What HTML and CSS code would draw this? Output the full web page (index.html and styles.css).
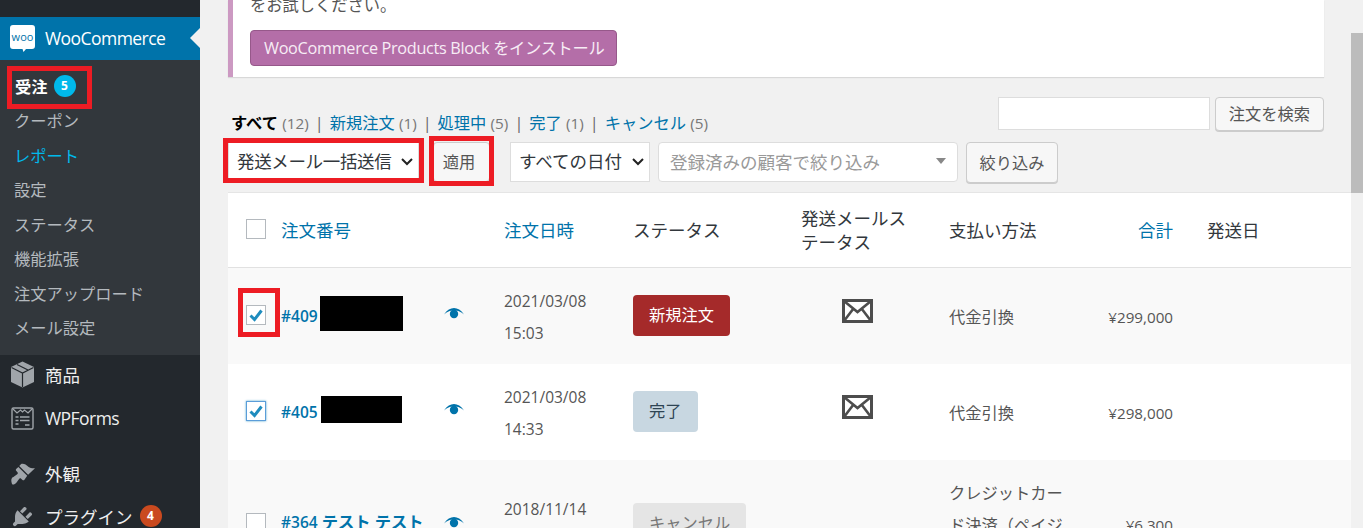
FILE: index.html
```html
<!DOCTYPE html>
<html lang="ja">
<head>
  <meta charset="UTF-8">
  <title>注文 - WooCommerce</title>
  <link rel="stylesheet" href="styles.css">
</head>
<body>

  <nav class="sidebar">
    <a class="menu-item current latin" href="#">
      <svg class="menu-icon" width="25" height="27" viewBox="0 0 25 27">
        <path fill="#fff" d="M3 0h19a3 3 0 0 1 3 3v18a3 3 0 0 1-3 3h-6l-2.500 3-1-3H3a3 3 0 0 1-3-3V3a3 3 0 0 1 3-3z"/>
        <text class="woo-text" x="12.500" y="15.500" text-anchor="middle">woo</text>
      </svg>
      WooCommerce
    </a>
    <div class="submenu">
      <a class="sub-item strong" href="#"><span class="marked mark-orders">受注</span><span class="count count-blue">5</span></a>
      <a class="sub-item" href="#">クーポン</a>
      <a class="sub-item active" href="#">レポート</a>
      <a class="sub-item" href="#">設定</a>
      <a class="sub-item" href="#">ステータス</a>
      <a class="sub-item" href="#">機能拡張</a>
      <a class="sub-item" href="#">注文アップロード</a>
      <a class="sub-item" href="#">メール設定</a>
    </div>
    <a class="menu-item" href="#">
      <svg class="menu-icon" width="25" height="27" viewBox="0 0 25 27">
        <path fill="#a0a5aa" d="M12.500 0.500L24 6v15l-11.500 5.500L1 21V6z"/>
        <path fill="none" stroke="#23282d" stroke-width="1.200" d="M1.500 6.500l11 5.500 11-5.500M7 3.500l11 5.500M12.500 12v14"/>
      </svg>
      商品
    </a>
    <a class="menu-item latin" href="#">
      <svg class="menu-icon" width="25" height="25" viewBox="0 0 25 25">
        <rect x="2" y="2" width="21" height="21" rx="1.500" fill="none" stroke="#a0a5aa" stroke-width="1.400"/>
        <path fill="none" stroke="#a0a5aa" stroke-width="1.200" d="M3 3l4 4 3.500-3 2 2 2-2 3.500 3 4-4"/>
        <path fill="none" stroke="#a0a5aa" stroke-width="1.600" d="M5.500 11h3M10 11h9.500M5.500 14.500h3M10 14.500h9.500M5.500 18h3M15 19h4.500"/>
      </svg>
      WPForms
    </a>
    <a class="menu-item menu-gap" href="#">
      <svg class="menu-icon" width="25" height="25" viewBox="0 0 20 20">
        <path fill="#a0a5aa" d="M14.480 11.060L7.410 3.990l1.500-1.500c.5-.56 2.300-.47 3.510.32 1.210.8 1.430 1.280 2.910 2.100 1.180.64 2.450 1.260 4.670.85l-5.520 5.300zm-.71.71L6.700 4.700 4.930 6.470c-.39.39-.39 1.020 0 1.410l1.060 1.060c.39.39.39 1.030 0 1.420-.6.6-1.430 1.110-2.210 1.690-.35.26-.7.53-1.010.84C1.430 13.230.4 14.800 1.600 18.400c.9 1 2.400.1 3.400-1 .3-.3.6-.7.8-1.100.6-.8 1.100-1.600 1.700-2.200.4-.4 1-.4 1.400 0l1.100 1c.4.4 1 .4 1.400 0z"/>
      </svg>
      外観
    </a>
    <a class="menu-item" href="#">
      <svg class="menu-icon" width="25" height="25" viewBox="0 0 20 20">
        <path fill="#a0a5aa" d="M13.110 4.360L9.870 7.600 8 5.730l3.240-3.240c.35-.34 1.050-.2 1.560.32.52.51.66 1.210.31 1.550zm-8 1.770l.91-1.120 9.010 9.010-1.190.84c-.71.71-2.630 1.160-3.820 1.160H6.140L4.900 17.260c-.59.59-1.540.59-2.120 0-.59-.58-.59-1.530 0-2.120l1.240-1.240v-3.880c0-1.130.4-3.190 1.090-3.890zm7.260 3.970l3.240-3.240c.34-.35 1.040-.21 1.550.31.52.51.66 1.210.31 1.550l-3.240 3.250z"/>
      </svg>
      プラグイン<span class="count count-orange">4</span>
    </a>
  </nav>

  <main class="content">
    <div class="notice">
      <p>をお試しください。</p>
      <a class="btn-woo" href="#">WooCommerce Products Block をインストール</a>
    </div>

    <div class="top-row">
      <ul class="status-links">
        <li><b>すべて</b> <span class="num">(12)</span></li>
        <li><a href="#">新規注文</a> <span class="num">(1)</span></li>
        <li><a href="#">処理中</a> <span class="num">(5)</span></li>
        <li><a href="#">完了</a> <span class="num">(1)</span></li>
        <li><a href="#">キャンセル</a> <span class="num">(5)</span></li>
      </ul>
      <form class="search-box">
        <input type="text" class="search-input">
        <button type="button" class="btn">注文を検索</button>
      </form>
    </div>

    <div class="filters">
      <div class="marked mark-bulk">
        <select class="select select-bulk"><option>発送メール一括送信</option></select>
      </div>
      <div class="marked mark-apply">
        <button type="button" class="btn btn-apply">適用</button>
      </div>
      <select class="select select-date"><option>すべての日付</option></select>
      <div class="customer-select">
        <span>登録済みの顧客で絞り込み</span>
        <i class="caret"></i>
      </div>
      <button type="button" class="btn btn-filter">絞り込み</button>
    </div>

    <table class="orders">
      <colgroup>
        <col class="col-check">
        <col class="col-order">
        <col class="col-date">
        <col class="col-status">
        <col class="col-mail">
        <col class="col-pay">
        <col class="col-total">
        <col>
      </colgroup>
      <thead>
        <tr>
          <th><span class="check"></span></th>
          <th><a href="#">注文番号</a></th>
          <th><a href="#">注文日時</a></th>
          <th>ステータス</th>
          <th>発送メールス<br>テータス</th>
          <th>支払い方法</th>
          <th class="right"><a href="#">合計</a></th>
          <th class="th-ship">発送日</th>
        </tr>
      </thead>
      <tbody>
        <tr class="odd">
          <td><span class="marked mark-check check checked"></span></td>
          <td>
            <div class="order-cell redacted">
              <span class="order-name"><a class="order-id" href="#">#409</a><span class="redact redact-a"></span></span>
              <svg class="eye" width="20" height="11" viewBox="0 0 20 11"><path d="M0 6.500C3 2 6.500 0 10 0s7 2 10 6.500C17 4 14.500 3 13 2.800H7C5.500 3 3 4 0 6.500z"/><circle cx="10" cy="6" r="4.200"/></svg>
            </div>
          </td>
          <td class="text-cell date">2021/03/08<br>15:03</td>
          <td><span class="badge badge-new">新規注文</span></td>
          <td class="mail">
            <svg width="31" height="24" viewBox="0 0 31 24"><rect x="1.500" y="1.500" width="28" height="21" fill="#fff" stroke="#4d4d4d" stroke-width="3"/><path fill="none" stroke="#4d4d4d" stroke-width="2.600" d="M2 2l13.500 11L29 2M2 22l9.500-12.500M29 22L19.500 9.500"/></svg>
          </td>
          <td class="text-cell">代金引換</td>
          <td class="text-cell right total">¥299,000</td>
          <td></td>
        </tr>
        <tr>
          <td><span class="check checked focused"></span></td>
          <td>
            <div class="order-cell redacted">
              <span class="order-name"><a class="order-id" href="#">#405</a><span class="redact redact-b"></span></span>
              <svg class="eye" width="20" height="11" viewBox="0 0 20 11"><path d="M0 6.500C3 2 6.500 0 10 0s7 2 10 6.500C17 4 14.500 3 13 2.800H7C5.500 3 3 4 0 6.500z"/><circle cx="10" cy="6" r="4.200"/></svg>
            </div>
          </td>
          <td class="text-cell date">2021/03/08<br>14:33</td>
          <td><span class="badge badge-done">完了</span></td>
          <td class="mail">
            <svg width="31" height="24" viewBox="0 0 31 24"><rect x="1.500" y="1.500" width="28" height="21" fill="#fff" stroke="#4d4d4d" stroke-width="3"/><path fill="none" stroke="#4d4d4d" stroke-width="2.600" d="M2 2l13.500 11L29 2M2 22l9.500-12.500M29 22L19.500 9.500"/></svg>
          </td>
          <td class="text-cell">代金引換</td>
          <td class="text-cell right total">¥298,000</td>
          <td></td>
        </tr>
        <tr class="odd">
          <td><span class="check"></span></td>
          <td>
            <div class="order-cell">
              <span class="order-name"><a href="#"><span class="order-id">#364</span> テスト テスト</a></span>
              <svg class="eye" width="20" height="11" viewBox="0 0 20 11"><path d="M0 6.500C3 2 6.500 0 10 0s7 2 10 6.500C17 4 14.500 3 13 2.800H7C5.500 3 3 4 0 6.500z"/><circle cx="10" cy="6" r="4.200"/></svg>
            </div>
          </td>
          <td class="text-cell date">2018/11/14<br>10:20</td>
          <td><span class="badge badge-cancel">キャンセル</span></td>
          <td></td>
          <td class="text-cell">クレジットカード決済（ペイジェント）</td>
          <td class="text-cell right total">¥6,300</td>
          <td></td>
        </tr>
      </tbody>
    </table>
  </main>

  <div class="scrollbar"><div class="thumb"></div></div>

</body>
</html>
```

FILE: styles.css
```css
* {
  box-sizing: border-box;
}

html, body {
  height: 528px;
  overflow: hidden;
}

body {
  margin: 0;
  display: flex;
  background-color: #f1f1f1;
  color: #555;
  font-family: "Open Sans", "Noto Sans CJK JP", sans-serif;
  font-size: 16.25px;
}

a {
  text-decoration: none;
  color: #0073aa;
}

/* sidebar */
.sidebar {
  width: 200px;
  flex: none;
  padding-top: 17px;
  background-color: #23282d;
}

.menu-item {
  display: flex;
  align-items: center;
  height: 42.5px;
  padding: 0 0 2px 10px;
  color: #eee;
  font-size: 17.5px;
  white-space: nowrap;
}

.menu-item.latin {
  padding-bottom: 0;
  letter-spacing: -0.55px;
}

.menu-icon {
  flex: none;
  margin-right: 10px;
}

.menu-item.current {
  position: relative;
  background-color: #0073aa;
  color: #fff;
}

.menu-item.current::after {
  content: "";
  position: absolute;
  right: 0;
  top: 11px;
  border: 10px solid transparent;
  border-right-color: #f1f1f1;
  border-left-width: 0;
}

.woo-text {
  fill: #0073aa;
  font-size: 11px;
  letter-spacing: 0;
}

.menu-gap {
  margin-top: 14px;
}

.submenu {
  padding: 9px 0 10px;
  background-color: #32373c;
}

.sub-item {
  display: flex;
  align-items: center;
  height: 34.5px;
  padding-left: 14px;
  color: #b4b9be;
}

.sub-item.strong {
  padding-left: 15px;
  color: #fff;
  font-weight: 700;
}

.sub-item.active {
  color: #00b9eb;
}

.count {
  display: inline-block;
  width: 22px;
  height: 22px;
  margin-left: 7px;
  border-radius: 50%;
  color: #fff;
  font-size: 12px;
  font-weight: 700;
  line-height: 22px;
  text-align: center;
}

.count-blue {
  margin-left: 6px;
  background-color: #00b9eb;
}

.count-orange {
  background-color: #ca4a1f;
}

/* red frames drawn over the screenshot */
.marked {
  position: relative;
}

.marked::after {
  content: "";
  position: absolute;
  border: 5px solid #ed1c24;
  pointer-events: none;
}

.mark-orders::after {
  inset: -8px -44px -11px -8px;
}

.mark-bulk::after {
  inset: -4px -5px -1px -5px;
}

.mark-apply::after {
  inset: -6px -4px -4px -4px;
}

/* the checkbox border does not count for inset */
.mark-check::after {
  inset: -18px -15px -13px -9px;
}

/* main */
.content {
  flex: 1;
  min-width: 0;
}

.notice {
  display: flex;
  flex-direction: column;
  justify-content: flex-end;
  align-items: flex-start;
  height: 77px;
  margin: 0 27px 0 28px;
  padding: 0 0 11px 17px;
  overflow: hidden;
  background-color: #fff;
  border-left: 5px solid #cc99c2;
  box-shadow: 0 1px 1px rgba(0,0,0,0.1);
}

.notice p {
  margin: 0 0 13px;
  font-size: 16.25px;
  line-height: 24px;
}

.btn-woo {
  height: 36px;
  padding: 0 12px 0 13px;
  background-color: #b46ea8;
  border: 1px solid #96588a;
  border-radius: 4px;
  color: #f7ecf5;
  font-size: 16.25px;
  letter-spacing: -0.33px;
  line-height: 34px;
  white-space: nowrap;
}

.top-row {
  display: flex;
  justify-content: space-between;
  align-items: flex-end;
  margin: 20px 27px 0 28px;
}

.status-links {
  display: flex;
  margin: 0 0 -4px;
  padding: 0 0 0 3px;
  list-style: none;
  line-height: 24px;
}

.status-links li + li::before {
  content: "|";
  margin: 0 6px;
  color: #666;
}

.status-links b {
  color: #000;
}

.num {
  color: #777;
  font-size: 15.3px;
}

.search-box {
  display: flex;
  gap: 5px;
}

.search-input {
  width: 212px;
  height: 33px;
  background-color: #fff;
  border: 1px solid #ddd;
}

.btn {
  height: 34px;
  padding: 0 13px 2px;
  background-color: #f7f7f7;
  border: 1px solid #ccc;
  border-radius: 4px;
  box-shadow: 0 1px 0 #ccc;
  color: #555;
  font-family: inherit;
  font-size: 16.25px;
}

.filters {
  display: flex;
  align-items: flex-start;
  margin: 11px 0 0 28px;
}

.select {
  height: 40px;
  padding: 0 24px 2px 8px;
  appearance: none;
  background-color: #fff;
  background-image: url("data:image/svg+xml,%3Csvg xmlns='http://www.w3.org/2000/svg' width='12' height='8'%3E%3Cpath fill='none' stroke='%23222' stroke-width='2' d='M1 1l5 5 5-5'/%3E%3C/svg%3E");
  background-repeat: no-repeat;
  background-position: right 5px center;
  border: 1px solid #ddd;
  border-radius: 0;
  color: #32373c;
  font-family: inherit;
  font-size: 17.5px;
}

.select-bulk {
  display: block;
  width: 191px;
  letter-spacing: -0.35px;
}

.mark-bulk {
  margin-right: 14px;
}

.btn-apply {
  display: block;
  width: 57px;
  height: 40px;
  padding: 0 5px 2px 0;
}

.mark-apply {
  margin-right: 20px;
}

.select-date {
  width: 140px;
  margin-right: 8px;
}

.customer-select {
  display: flex;
  justify-content: space-between;
  align-items: center;
  width: 300px;
  height: 40px;
  margin-right: 8px;
  padding: 0 11px 2px;
  background-color: #fff;
  border: 1px solid #ddd;
  border-radius: 4px;
  color: #999;
  font-size: 17.5px;
}

.caret {
  border: 5px solid transparent;
  border-top: 6px solid #888;
  border-bottom-width: 0;
}

.btn-filter {
  width: 92px;
  height: 41px;
  padding: 0 0 2px;
}

/* orders table */
.orders {
  width: calc(100% - 28px);
  margin: 9px 0 0 28px;
  border-collapse: collapse;
  table-layout: fixed;
  background-color: #fff;
  border-top: 1px solid #e5e5e5;
}

.col-check { width: 43px; }
.col-order { width: 223px; }
.col-date { width: 129px; }
.col-status { width: 168px; }
.col-mail { width: 148px; }
.col-pay { width: 136px; }
.col-total { width: 108px; }

.orders th {
  height: 75px;
  padding: 0 10px;
  border-bottom: 1px solid #e1e1e1;
  color: #32373c;
  font-size: 17.5px;
  font-weight: 400;
  line-height: 24px;
  text-align: left;
}

.orders td {
  height: 96px;
  padding: 16px 10px;
  line-height: 32px;
}

.orders td.text-cell {
  padding-top: 17px;
  padding-bottom: 15px;
}

.orders .right {
  text-align: right;
}

.orders th.th-ship {
  padding-left: 24px;
}

.odd {
  background-color: #f9f9f9;
}

.check {
  display: block;
  width: 20px;
  height: 20px;
  margin: -2px 0 0 8px;
  background-color: #fff;
  border: 1px solid #b4b9be;
}

.checked {
  background-image: url("data:image/svg+xml,%3Csvg xmlns='http://www.w3.org/2000/svg' width='18' height='18'%3E%3Cpath fill='none' stroke='%231e8cbe' stroke-width='3' d='M3.500 9.500l4 4 7-9'/%3E%3C/svg%3E");
  background-position: center;
  background-repeat: no-repeat;
}

.focused {
  border-color: #5b9dd9;
  box-shadow: 0 0 2px rgba(30,140,190,0.8);
}

.order-cell {
  display: flex;
  align-items: center;
  margin-top: -4px;
}

.order-cell.redacted {
  margin-top: -6px;
}

.order-cell.redacted .order-id {
  margin-top: 6px;
}

.order-name {
  display: flex;
  align-items: center;
  width: 163px;
  flex: none;
  font-weight: 600;
  white-space: nowrap;
}

.order-id {
  font-size: 15.5px;
}

.redact {
  display: block;
  background-color: #000;
}

.redact-a {
  width: 83px;
  height: 35px;
  margin-left: 2px;
}

.redact-b {
  width: 81px;
  height: 27px;
  margin-left: 3px;
}

.eye {
  flex: none;
  fill: #0073aa;
}

.date {
  color: #555;
  font-size: 15.5px;
}

.total {
  font-size: 15.2px;
}

.badge {
  display: inline-block;
  height: 41px;
  margin-top: -2px;
  padding: 0 16px;
  border-radius: 4px;
  line-height: 41px;
  vertical-align: middle;
}

.badge-new {
  background-color: #a52a2a;
  color: #fff;
}

.badge-done {
  background-color: #c8d7e1;
  color: #2e4453;
}

.badge-cancel {
  background-color: #e5e5e5;
  color: #777;
}

.orders td.mail {
  padding-left: 51px;
}

.mail svg {
  display: block;
  margin-top: -10px;
}

/* window scrollbar */
.scrollbar {
  width: 12px;
  flex: none;
  padding-top: 33px;
  background-color: #f1f1f1;
}

.thumb {
  height: 160px;
  background-color: #bcbcbc;
}
```
